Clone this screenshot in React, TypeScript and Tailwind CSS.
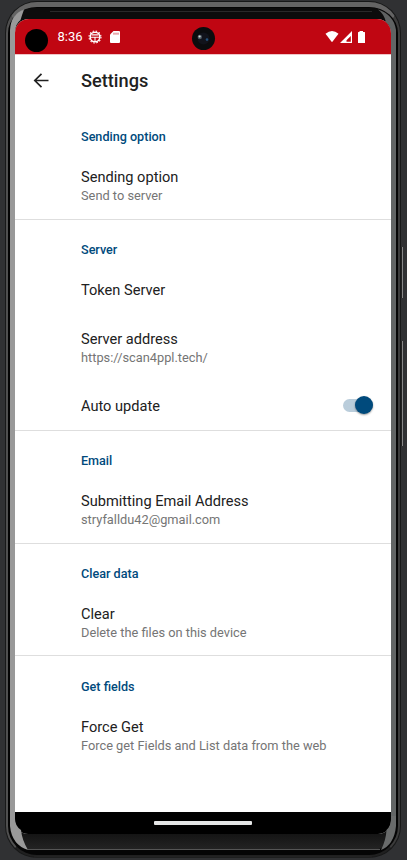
import React from "react";

function Category({ children }: { children: string }) {
  return <h2 className="pt-[18px] text-[12.6px] leading-[16px] font-medium text-[#004a7c]">{children}</h2>;
}

function Item({ title, note, className = "" }: { title: string; note?: string; className?: string }) {
  return (
    <div className={className}>
      <div className="text-[14.6px] leading-[20px] text-[#212121]">{title}</div>
      {note && <div className="text-[12.8px] leading-[17px] text-[#757575]">{note}</div>}
    </div>
  );
}

function Section({ height, children }: { height: string; children: React.ReactNode }) {
  return <section className={`${height} pl-[66px] shrink-0`}>{children}</section>;
}

function Divider() {
  return <div className="h-px shrink-0 bg-[#dedede]" />;
}

function StatusBar() {
  return (
    <div className="flex h-[35px] shrink-0 items-center bg-[#c00612] text-white">
      <div className="ml-[10px] mt-[8px] size-[23px] rounded-full bg-black" />
      <span className="ml-[9.5px] mt-px w-[26px] text-[13px] leading-[16px]">8:36</span>
      <svg className="ml-[4px] mt-px size-[14px]" viewBox="0 0 14 14" fill="none" stroke="white">
        <circle cx="7" cy="7" r="4.8" strokeWidth="1.5" />
        <circle cx="7" cy="7" r="6" strokeWidth="1.1" strokeDasharray="1.5 1.64" />
        <path d="M3.6 4.9h6.8M2.5 7.3h9M7 7v4.5" strokeWidth="1.1" />
      </svg>
      <svg className="ml-[8px] mt-px h-[12px] w-[10px]" viewBox="0 0 10 12">
        <path d="M3.5 0H9a1 1 0 0 1 1 1v10a1 1 0 0 1-1 1H1a1 1 0 0 1-1-1V3.5Z" fill="white" />
        <path d="M4 1.7v2M6 1.7v2M8 1.7v2" stroke="#c00612" strokeWidth=".7" />
      </svg>
      <div className="ml-[72px] mt-[4px] flex size-[23px] items-center justify-center rounded-full bg-[#0b0c0e]">
        <svg className="size-[19px]" viewBox="0 0 19 19">
          <circle cx="9.5" cy="9.5" r="6" fill="#11131b" />
          <circle cx="5.8" cy="8" r="2.2" fill="#4c5660" />
          <circle cx="5.6" cy="7.5" r="1.1" fill="#d2ded6" />
          <circle cx="13" cy="10.6" r="1.3" fill="#235079" />
        </svg>
      </div>
      <svg className="ml-[110px] mt-px h-[12px] w-[42px]" viewBox="0 0 42 12">
        <path d="M.5 2.8Q7-2.6 13.5 2.8L7 11.2Z" fill="white" />
        <path d="M15 12 27 0v12ZM21.5 10.8h4.3V5L21.5 9.3Z" fill="white" fillRule="evenodd" />
        <path d="M34.5 0h3.5v1h1.5q.5 0 .5.5v10q0 .5-.5.5h-6q-.5 0-.5-.5v-10q0-.5.5-.5h1Z" fill="white" />
      </svg>
    </div>
  );
}

function Screen() {
  return (
    <main className="flex h-[815px] w-[376px] flex-col overflow-hidden rounded-t-[14px] rounded-b-[13px] bg-white">
      <StatusBar />
      <header className="flex h-[64px] shrink-0 items-start border-t border-[#f0c4c7] pt-[14.5px]">
        <svg className="ml-[17.5px] mt-[2px] size-[17px]" viewBox="0 0 17 17" fill="none" stroke="#212121" strokeWidth="1.7">
          <path d="M15.5 8.5H2M8.5 1.8 1.8 8.5l6.7 6.7" />
        </svg>
        <h1 className="ml-[31.5px] text-[18.2px] leading-[22px] font-medium text-[#212121]">Settings</h1>
      </header>
      <Section height="h-[101px]">
        <div className="-mt-[7px]"><Category>Sending option</Category></div>
        <Item className="mt-[22px]" title="Sending option" note="Send to server" />
      </Section>
      <Divider />
      <Section height="h-[210px]">
        <div className="pt-[4px]"><Category>Server</Category></div>
        <Item className="mt-[22px]" title="Token Server" />
        <Item className="mt-[29px]" title="Server address" note="https://scan4ppl.tech/" />
        <div className="mt-[29.5px] flex items-center">
          <Item title="Auto update" />
          <div className="relative -top-[0.5px] ml-auto mr-[18px] h-[13px] w-[30px] rounded-full bg-[#bacddb]">
            <div className="absolute -top-[3px] right-0 size-[18px] rounded-full bg-[#004a7c] shadow-[0_1px_2px_#0006]" />
          </div>
        </div>
      </Section>
      <Divider />
      <Section height="h-[112px]">
        <div className="pt-[4px]"><Category>Email</Category></div>
        <Item className="mt-[22px]" title="Submitting Email Address" note="stryfalldu42@gmail.com" />
      </Section>
      <Divider />
      <Section height="h-[111px]">
        <div className="pt-[4px]"><Category>Clear data</Category></div>
        <Item className="mt-[22px]" title="Clear" note="Delete the files on this device" />
      </Section>
      <Divider />
      <Section height="h-[156px]">
        <div className="pt-[5px]"><Category>Get fields</Category></div>
        <Item className="mt-[22px]" title="Force Get" note="Force get Fields and List data from the web" />
      </Section>
      <nav className="flex flex-1 justify-center bg-black pt-[9px]">
        <div className="h-[4px] w-[98px] rounded-[1px] bg-[#e5e6e6]" />
      </nav>
    </main>
  );
}

/* Light catching the curved glass at the corners, and the fine rim lines. */
function BezelReflections() {
  return (
    <svg className="pointer-events-none absolute inset-0 h-[860px] w-[407px]" viewBox="0 0 407 860" fill="none">
      <path d="M10 40V30Q11 14 24 9.5Q22 15 20.5 20Q15 24 15 33V40Z" fill="#999" />
      <path d="M396 40V30Q394 15 378 9.5Q384 14 386 22Q391 26 391 33V40Z" fill="#5f6262" />
      <path d="M10 816V826Q12 845 28 850Q22 840 21 830Q15 826 15 819V816Z" fill="#999" />
      <path d="M396 816V826Q394 845 381 850Q386 840 386.5 830Q391 826 391 819V816Z" fill="#696b6b" />
      <path d="M50 11.5H372" stroke="#292929" />
      <path d="M28 849.5H380" stroke="#555" />
      <path d="M34 857H372" stroke="#272727" />
    </svg>
  );
}

export default function App() {
  return (
    <div className="relative h-[860px] w-[407px] overflow-hidden bg-[#303133] px-[5px] pt-px font-[Roboto,sans-serif]">
      <div className="h-[857px] w-[396px] rounded-[32px] bg-[#171818] p-px">
        <div className="h-[855px] w-[394px] rounded-[31px] border-t-[5px] border-r-[2px] border-b-[2px] border-l-[2px] border-t-[#646464] border-r-[#3c3c3c] border-b-[#202020] border-l-[#505050] bg-[#050505] pt-px pl-[2px]">
          <div className="h-[842px] w-[386px] overflow-hidden rounded-t-[24px] rounded-b-[24px] bg-linear-to-b from-[#0c0c0c] from-97% to-[#242424]">
            <div className="flex h-full flex-col bg-[linear-gradient(#999,#999),linear-gradient(#626565,#626565)] bg-[length:5px_782px,5px_782px] bg-[position:left_30px,right_30px] bg-no-repeat px-[5px] pt-[11px]">
              <Screen />
            </div>
          </div>
        </div>
      </div>
      <BezelReflections />
      <div className="absolute top-[247px] left-[401px] h-[51px] w-[2px] border-r border-[#888] bg-[#222]" />
      <div className="absolute top-[341px] left-[401px] h-[105px] w-[2px] border-r border-[#888] bg-[#222]" />
    </div>
  );
}
